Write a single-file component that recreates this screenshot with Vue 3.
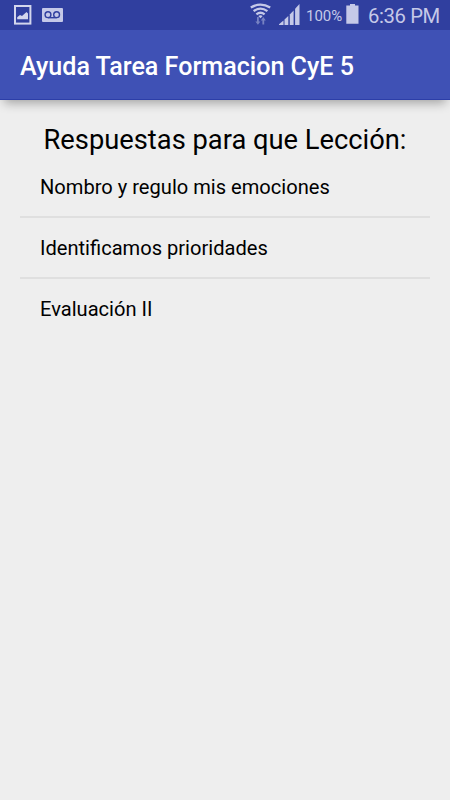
<template>
  <div class="screen">
    <header>
      <div class="status">
        <svg class="picture" width="18" height="20" viewBox="0 0 18 20">
          <rect x="1" y="1" width="15.4" height="17.6" fill="none" stroke="#d3d6ed" stroke-width="2" />
          <path d="M3.2 14.2V12.2L6 10L8 11L12.5 7L14 8.5V14.2Z" fill="#d3d6ed" />
        </svg>
        <svg class="voicemail" width="21" height="14" viewBox="0 0 21 14">
          <rect width="21" height="14" rx="1" fill="#c5c9e8" />
          <g fill="none" stroke="#303f9f" stroke-width="1.4">
            <circle cx="6" cy="6.7" r="2.9" />
            <circle cx="14.6" cy="6.7" r="2.9" />
            <path d="M6 9.7H14.6" />
          </g>
        </svg>
        <svg class="wifi" width="22" height="24" viewBox="0 0 22 24">
          <g fill="none" stroke="#c5c9e8" stroke-width="2.3">
            <path d="M.8 4.6Q10.5 -1.4 20.2 4.6" />
            <path d="M3.6 8.2Q10.5 3 17.4 8.2" />
            <path d="M6.4 11.4Q10.5 8 14.6 11.4" />
          </g>
          <path d="M8.3 13Q10.5 11.6 12.7 13L10.5 15.2Z" fill="#c5c9e8" />
          <g fill="#7782c2">
            <path d="M7 14H8.8V18.4H10.4L7.9 21.8L5.4 18.4H7Z" />
            <path d="M12.4 21.6V17.4H10.8L13.3 14L15.8 17.4H14.2V21.6Z" />
          </g>
        </svg>
        <svg class="signal" width="21" height="21" viewBox="0 0 21 21" fill="#c5c9e8">
          <path d="M0 20.3L4.5 16.6V21H0Z" />
          <path d="M5.5 15.6L9.3 12V21H5.5Z" />
          <path d="M10.8 10.6L14.6 6.5V21H10.8Z" />
          <path d="M16.1 4.8L20.5 0V21H16.1Z" />
        </svg>
        <span class="percent">100%</span>
        <svg class="battery" width="13" height="20" viewBox="0 0 13 20">
          <path d="M4 0H9V1.6H12.5V19.7H.3V1.6H4Z" fill="#c5c9e8" />
        </svg>
        <span class="clock">6:36 PM</span>
      </div>
      <div class="toolbar">Ayuda Tarea Formacion CyE 5</div>
    </header>
    <main>
      <h1>Respuestas para que Lección:</h1>
      <ul>
        <li v-for="lesson in lessons" :key="lesson">{{ lesson }}</li>
      </ul>
    </main>
  </div>
</template>

<script setup>
const lessons = [
  'Nombro y regulo mis emociones',
  'Identificamos prioridades',
  'Evaluación II'
]
</script>

<style>
body {
  margin: 0;
  background: #eeeeee;
}
</style>

<style scoped>
.screen {
  height: 800px;
  overflow: hidden;
  background: #eeeeee;
  font-family: Roboto, sans-serif;
  color: #000;
}
header {
  position: relative;
  box-shadow: 0 7px 10px -4px rgba(0, 0, 0, 0.32);
}
.status {
  display: flex;
  align-items: flex-start;
  box-sizing: border-box;
  height: 30px;
  background: #303f9f;
  color: #c5c9e8;
  white-space: nowrap;
}
.status svg {
  flex: none;
}
.picture {
  margin: 5px 0 0 14px;
}
.voicemail {
  margin: 8px 0 0 10px;
}
.wifi {
  margin: 3px 0 0 187px;
}
.signal {
  margin: 4px 0 0 7px;
}
.percent {
  width: 40px;
  margin-left: 6px;
  font-size: 15px;
  line-height: 32px;
}
.battery {
  margin-top: 4px;
}
.clock {
  margin-left: 9px;
  font-size: 20.3px;
  letter-spacing: -0.4px;
  line-height: 32px;
}
.toolbar {
  box-sizing: border-box;
  height: 70px;
  padding-left: 20px;
  border-bottom: 1px solid #2c3ea8;
  background: #3f51b5;
  color: #fff;
  font-size: 25.1px;
  font-weight: 500;
  line-height: 73px;
  white-space: nowrap;
}
main {
  padding: 21px 20px 0;
}
h1 {
  margin: 0;
  font-size: 27.3px;
  font-weight: 400;
  line-height: 38px;
  text-align: center;
  white-space: nowrap;
}
ul {
  margin: -2px 0 0;
  padding: 0;
  list-style: none;
}
li {
  box-sizing: border-box;
  height: 61px;
  padding-left: 20px;
  border-bottom: 2px solid #dfdfdf;
  font-size: 20.1px;
  line-height: 61px;
}
li:last-child {
  border-bottom: 0;
}
</style>
